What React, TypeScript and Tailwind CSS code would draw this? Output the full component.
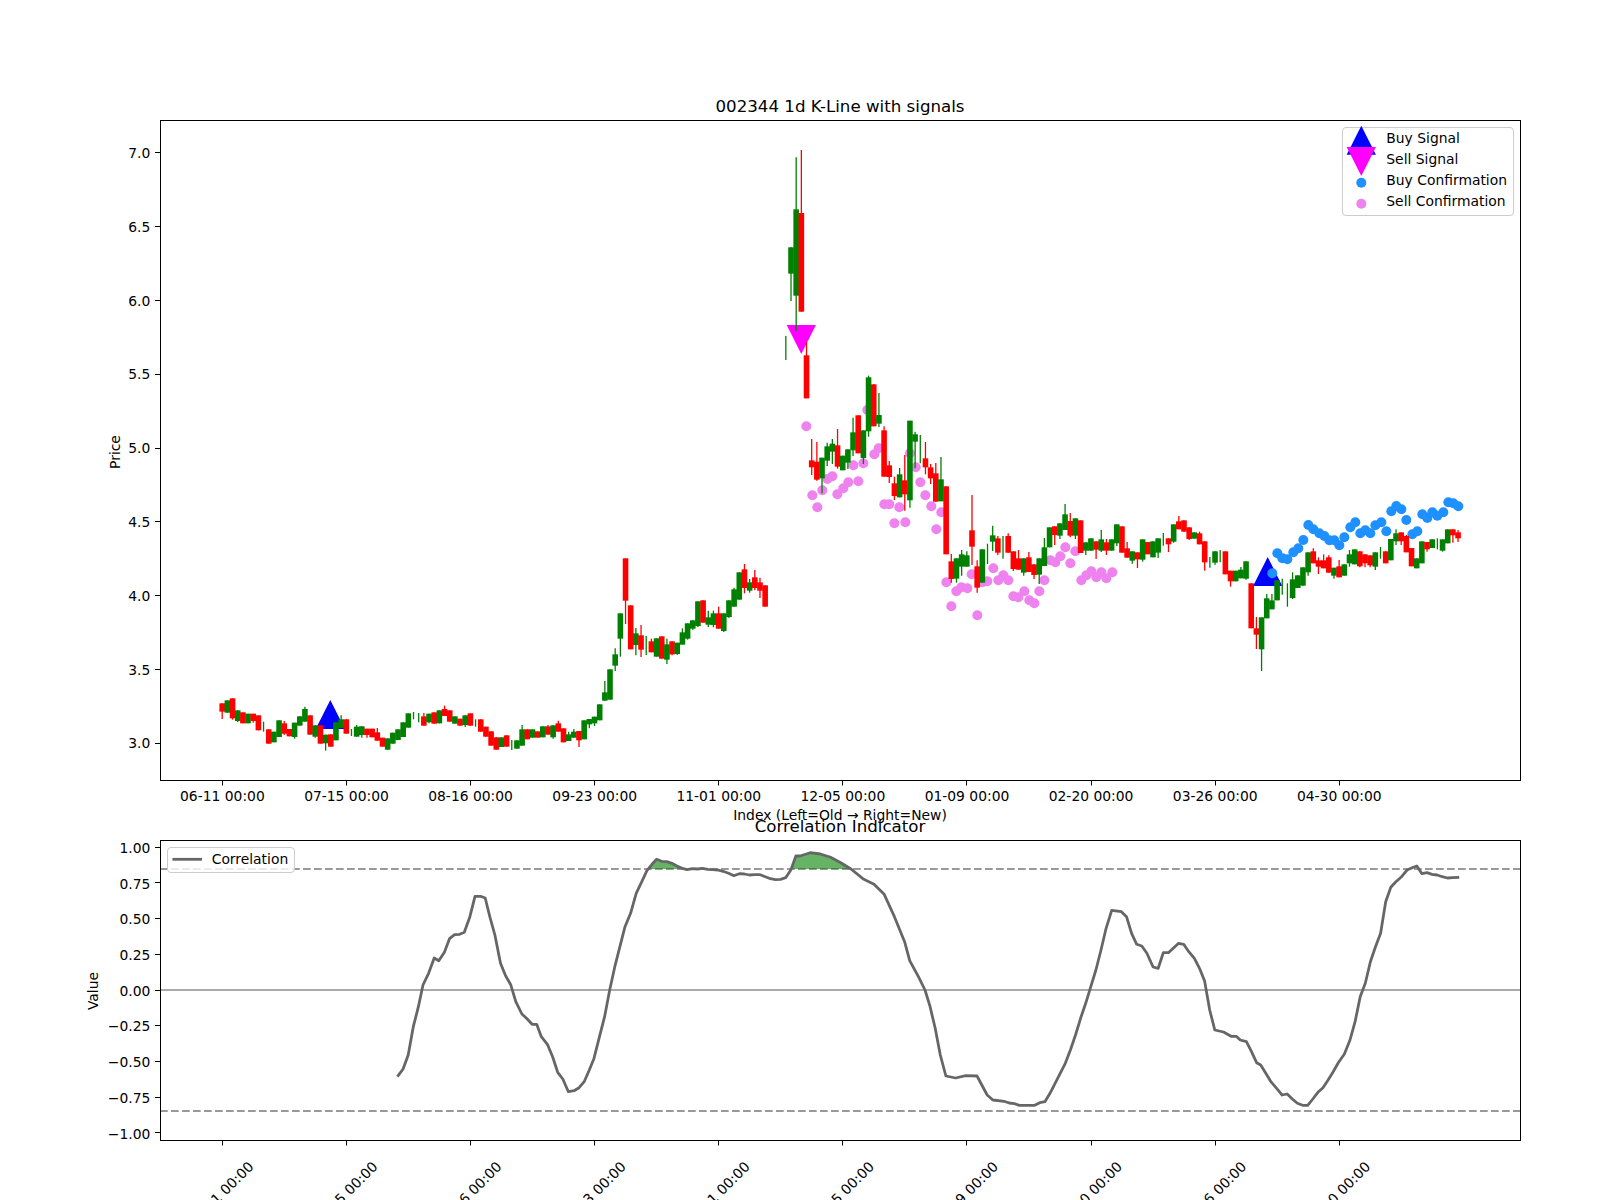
type Row = [string, number, number, number?, number?];

// rows are [colour, bodyTop, bodyBottom, wickTop, wickBottom], read off at 3x from a given y origin
const toCandles = (originY: number, rows: Row[]) =>
  rows.map(([c, t, b, wt, wb]) => ({
    color: c === "r" ? "#ff0000" : "#008000",
    top: originY + t / 3,
    bottom: originY + b / 3,
    wickTop: originY + (wt ?? t) / 3,
    wickBottom: originY + (wb ?? b) / 3,
    hasBody: b > t,
  }));

const candles = [
  ...toCandles(640, [
    ["r", 190, 215, 190, 237], ["g", 181, 218], ["r", 175, 235, 175, 239], ["g", 211, 243, 211, 246], ["r", 217, 250],
    ["g", 221, 250], ["r", 221, 243, 221, 248], ["r", 226, 271], ["g", 0, 0, 245, 275], ["r", 268, 311],
    ["g", 275, 307], ["g", 241, 291], ["r", 250, 281, 243, 285], ["r", 267, 289], ["g", 248, 291, 248, 296],
    ["g", 229, 257], ["g", 207, 245, 200, 245], ["r", 226, 284], ["g", 256, 290, 256, 293], ["r", 256, 311],
    ["g", 284, 310, 284, 332], ["r", 283, 320], ["g", 247, 301], ["g", 238, 264, 226, 264], ["r", 238, 281],
    ["g", 0, 0, 267, 288], ["g", 260, 290, 255, 290], ["g", 259, 285, 259, 293], ["r", 266, 285, 266, 293], ["r", 266, 292],
    ["r", 277, 302, 264, 302], ["r", 293, 320], ["g", 295, 329], ["g", 278, 311], ["g", 268, 300],
    ["g", 247, 291], ["g", 220, 263], ["g", 0, 0, 216, 238], ["g", 0, 0, 219, 247], ["r", 229, 257, 219, 257],
    ["g", 221, 247, 221, 250], ["r", 217, 251], ["g", 211, 250], ["r", 207, 228, 197, 228], ["r", 211, 245],
    ["g", 229, 251], ["r", 236, 257], ["g", 226, 255, 226, 261], ["r", 220, 257], ["g", 0, 0, 238, 260],
    ["r", 238, 275], ["r", 260, 290], ["r", 274, 317], ["r", 292, 329], ["g", 292, 321],
    ["r", 286, 320], ["g", 0, 0, 300, 330], ["g", 301, 326], ["g", 268, 317, 255, 317], ["r", 268, 298],
    ["g", 268, 293], ["r", 274, 293], ["g", 259, 292], ["r", 259, 284, 255, 284], ["g", 256, 292, 256, 296],
    ["r", 250, 275, 242, 275], ["r", 265, 307], ["g", 283, 303, 275, 303], ["g", 275, 293, 267, 293], ["r", 273, 301, 273, 321],
    ["g", 241, 298], ["g", 237, 253, 237, 265], ["g", 230, 250, 230, 258], ["g", 193, 241], ["g", 157, 182, 123, 182],
    ["g", 88, 179], ["g", 43, 77, 25, 93],
  ]),
  ...toCandles(540, [
    ["g", 220, 296, 220, 350], ["r", 55, 182, 55, 252], ["r", 196, 328], ["g", 280, 315, 264, 346], ["r", 286, 329, 255, 351],
    ["g", 0, 0, 288, 345], ["r", 304, 337, 296, 337], ["g", 295, 350], ["r", 289, 356], ["g", 313, 359, 296, 372],
    ["r", 304, 343, 304, 346], ["g", 308, 342, 308, 345], ["g", 277, 314, 265, 314], ["g", 250, 296, 250, 299], ["g", 241, 266, 241, 269],
    ["g", 184, 258, 184, 261], ["r", 181, 248], ["g", 232, 254, 212, 261], ["g", 220, 255, 212, 262], ["r", 220, 266, 200, 266],
    ["g", 220, 273, 220, 276], ["g", 181, 231, 181, 234], ["g", 148, 200, 143, 200], ["g", 97, 179], ["r", 88, 144, 72, 160],
    ["g", 127, 152, 117, 158], ["r", 112, 144, 90, 151], ["r", 127, 152, 113, 174], ["r", 136, 200],
  ]),
  null,
  null,
  null,
  ...toCandles(130, [
    ["g", 0, 0, 618, 690], ["g", 352, 431, 352, 513], ["g", 238, 497, 82, 603], ["r", 249, 545, 60, 545], ["r", 676, 805, 636, 805],
  ]),
  ...toCandles(380, [
    ["r", 241, 262, 177, 285], ["r", 245, 299, 186, 302], ["g", 233, 295, 233, 340], ["g", 199, 242, 188, 258], ["g", 191, 215, 177, 252],
    ["r", 196, 260, 147, 266], ["g", 227, 271], ["g", 208, 248, 208, 267], ["g", 157, 211, 113, 228], ["r", 106, 220],
    ["g", 151, 234, 151, 252], ["g", -8, 154, -13, 170], ["r", 13, 139], ["g", 105, 131, 39, 141], ["r", 151, 290, 139, 290],
    ["r", 256, 291, 243, 309], ["r", 310, 348, 290, 360], ["g", 283, 352, 264, 352], ["r", 301, 343, 225, 392], ["g", 122, 361, 122, 383],
    ["g", 163, 185, 155, 265], ["g", 0, 0, 165, 250], ["r", 235, 262, 186, 283], ["r", 262, 295, 252, 312], ["r", 280, 365, 249, 365],
    ["g", 298, 364, 231, 364], ["r", 319, 523], ["r", 544, 597, 522, 608], ["g", 535, 596, 535, 608], ["g", 523, 560, 510, 587],
    ["g", 526, 560, 514, 560], ["r", 451, 500, 345, 555], ["r", 559, 623, 541, 638], ["g", 508, 608], ["g", 0, 0, 491, 552],
    ["g", 466, 485, 437, 513], ["r", 475, 518, 468, 525], ["g", 0, 0, 468, 536], ["r", 468, 518, 460, 518], ["r", 514, 567, 514, 573],
    ["r", 535, 569, 510, 569], ["g", 535, 578, 535, 587], ["r", 532, 576, 516, 576], ["r", 553, 585, 553, 597], ["g", 535, 584, 535, 612],
    ["g", 502, 558, 474, 558], ["g", 442, 502], ["r", 439, 465, 439, 495], ["g", 430, 467, 430, 477], ["g", 403, 450, 372, 450],
    ["r", 423, 467, 399, 472], ["g", 415, 467, 415, 477], ["r", 421, 519], ["g", 487, 512, 487, 525], ["g", 475, 512],
    ["r", 484, 509, 484, 537], ["g", 478, 512, 450, 516], ["r", 487, 512, 477, 525], ["g", 478, 512], ["g", 433, 490, 433, 498],
  ]),
  ...toCandles(480, [
    ["r", 139, 218], ["r", 205, 233, 186, 233], ["g", 214, 242, 214, 251], ["r", 217, 238, 217, 264], ["g", 178, 239, 178, 245],
    ["r", 186, 223], ["g", 184, 232], ["g", 175, 218, 175, 234], ["g", 0, 0, 159, 197], ["r", 175, 193, 175, 216],
    ["g", 133, 185, 133, 188], ["r", 124, 148, 108, 148], ["r", 121, 155], ["r", 142, 177, 142, 180], ["g", 157, 176],
    ["r", 160, 193, 155, 193], ["r", 184, 247, 184, 272], ["g", 0, 0, 231, 263], ["g", 214, 248, 214, 254], ["g", 0, 0, 210, 247],
    ["r", 214, 283], ["r", 272, 304, 272, 320], ["g", 272, 304], ["g", 269, 295, 261, 295], ["g", 244, 296, 244, 299],
    ["r", 310, 445], ["r", 445, 464, 411, 507], ["g", 412, 508, 412, 573], ["g", 355, 415, 342, 415], ["g", 361, 388, 342, 388],
    ["g", 301, 361], ["g", 0, 0, 296, 344], ["g", 0, 0, 310, 380], ["g", 298, 354, 277, 357], ["g", 286, 324],
    ["g", 262, 317], ["g", 217, 277, 217, 287], ["r", 214, 250, 205, 250], ["r", 241, 260, 232, 282], ["r", 241, 265, 223, 265],
    ["r", 232, 278, 226, 278], ["g", 263, 287, 263, 296], ["r", 259, 292, 240, 292], ["g", 253, 287], ["g", 223, 250, 210, 260],
    ["g", 208, 253], ["r", 214, 259, 214, 262], ["r", 223, 250, 223, 262], ["r", 226, 256, 226, 262], ["g", 217, 260, 217, 270],
    ["g", 0, 0, 201, 236], ["r", 214, 250], ["g", 177, 241], ["g", 160, 184, 148, 195], ["r", 157, 184, 157, 195],
    ["r", 168, 217, 165, 217], ["r", 204, 259], ["g", 235, 265], ["g", 184, 250], ["r", 186, 208, 186, 215],
    ["g", 178, 204], ["g", 0, 0, 175, 208], ["g", 178, 212, 178, 215], ["g", 148, 190], ["r", 148, 166, 148, 188],
    ["r", 157, 175, 150, 186],
  ]),
];

const sellDots = [
  [79, 139], [97, 346], [112, 382], [127, 331], [142, 297], [157, 289], [172, 343], [190, 325], [205, 307], [220, 256],
  [235, 304], [250, 250], [262, 90], [283, 223], [296, 205], [313, 373], [328, 373], [343, 430], [358, 382], [376, 427],
  [390, 220], [407, 262], [421, 307], [436, 346], [454, 379], [484, 397], [469, 448], [499, 607], [514, 679], [529, 634],
  [544, 622], [562, 625], [575, 583], [592, 706], [607, 607], [622, 604], [640, 565], [655, 601], [670, 586], [685, 601],
  [700, 649], [715, 652], [733, 634], [748, 661], [763, 670], [778, 634], [793, 601], [811, 541], [826, 547], [841, 529],
  [856, 502], [871, 550], [886, 514], [904, 601], [919, 586], [934, 574], [949, 592], [964, 577], [979, 595], [997, 577],
].map(([x, y]) => [780 + x / 3, 380 + y / 3]);

const buyDots = [
  [457, 280], [472, 220], [487, 235], [502, 238], [520, 217], [535, 205], [550, 180], [565, 135], [580, 148], [598, 160],
  [613, 168], [628, 181], [643, 181], [658, 196], [673, 172], [691, 142], [706, 127], [721, 160], [736, 151], [751, 160],
  [766, 136], [784, 127], [799, 154], [814, 94], [829, 78], [844, 88], [859, 120], [877, 163], [892, 154], [907, 103],
  [922, 114], [937, 97], [952, 107], [970, 97], [985, 67], [1000, 70], [1015, 79],
].map(([x, y]) => [1120 + x / 3, 480 + y / 3]);

const corrLeft = [
  [779, 890], [790, 867], [800, 825], [810, 740], [820, 680], [829, 615], [840, 580], [851, 534], [860, 542], [871, 517],
  [881, 476], [891, 464], [901, 463], [910, 457], [921, 410], [931, 349], [942, 349], [951, 354], [960, 410], [970, 465],
  [981, 550], [991, 587], [1001, 614], [1011, 665], [1023, 702], [1033, 716], [1043, 733], [1052, 733], [1061, 770], [1073, 793],
  [1083, 830], [1093, 877], [1103, 897], [1114, 935], [1125, 932], [1135, 923], [1145, 905], [1155, 870], [1164, 836], [1175, 770],
  [1185, 710], [1195, 630], [1205, 560], [1215, 500], [1225, 440], [1236, 400], [1247, 340], [1258, 305], [1268, 272], [1278, 253],
  [1287, 238], [1297, 244], [1307, 245], [1317, 250], [1327, 258], [1337, 265], [1347, 269], [1357, 266], [1367, 267], [1377, 265],
  [1387, 268], [1397, 269], [1407, 270], [1417, 274], [1428, 280], [1438, 287], [1449, 281], [1459, 282], [1469, 285], [1479, 284],
  [1490, 284], [1500, 290], [1510, 296], [1520, 299], [1530, 298], [1540, 293], [1550, 270], [1560, 228],
].map(([x, y]) => [x / 1.96, 780 + y / 3]);

const corrRight = [
  [0, 228], [20, 218], [40, 222], [60, 232], [80, 248], [100, 267], [125, 298], [145, 313], [165, 343], [185, 410],
  [205, 485], [215, 542], [232, 590], [245, 630], [255, 680], [265, 745], [275, 825], [286, 888], [305, 894], [325, 887],
  [347, 888], [367, 945], [378, 960], [400, 964], [410, 969], [420, 971], [430, 976], [460, 976], [470, 968], [480, 965],
  [490, 940], [500, 910], [520, 850], [530, 810], [540, 765], [550, 715], [560, 670], [570, 620], [580, 570], [590, 510],
  [600, 445], [611, 391], [630, 395], [640, 410], [650, 460], [660, 493], [670, 498], [680, 520], [692, 561], [702, 565],
  [712, 518], [722, 518], [742, 490], [752, 493], [762, 515], [773, 535], [783, 565], [793, 603], [803, 690], [813, 750],
  [830, 756], [845, 769], [855, 769], [863, 780], [875, 785], [885, 815], [895, 848], [903, 855], [913, 880], [923, 905],
  [933, 923], [945, 945], [955, 942], [965, 957], [975, 970], [985, 976], [995, 976], [1005, 957], [1015, 937], [1025, 923],
  [1035, 900], [1045, 875], [1055, 848], [1067, 822], [1078, 780], [1088, 725], [1098, 650], [1108, 610], [1118, 545], [1128, 500],
  [1138, 460], [1148, 365], [1158, 322], [1168, 305], [1178, 292], [1190, 270], [1200, 263], [1209, 258], [1219, 281], [1229, 278],
  [1239, 283], [1249, 285], [1259, 290], [1269, 294], [1279, 293], [1292, 292],
].map(([x, y]) => [800 + x / 1.96, 780 + y / 3]);

const corr = [...corrLeft, ...corrRight];
const pts = (list: number[][]) => list.map(([x, y]) => `${x.toFixed(1)},${y.toFixed(1)}`).join(" ");

const upperY = 869;
const fillA = [[649.7, upperY], ...corr.filter(([x, y]) => x > 650 && x < 682 && y < upperY), [682.5, upperY]];
const fillB = [[792, upperY], ...corr.filter(([x, y]) => x > 792 && x < 851 && y < upperY), [851, upperY]];

const labels = ["06-11", "07-15", "08-16", "09-23", "11-01", "12-05", "01-09", "02-20", "03-26", "04-30"];
const tickX = labels.map((_, k) => 222.4 + 124.1 * k);
const candleX = (i: number) => 222.2 + 5.171 * i;
const priceY = (p: number) => 743.3 - 147.6 * (p - 3);
const corrY = (v: number) => 990 - 142.86 * v;
const snap = (v: number) => Math.floor(v) + 0.5;

const priceTicks = ["3.0", "3.5", "4.0", "4.5", "5.0", "5.5", "6.0", "6.5", "7.0"];
const corrTicks = ["1.00", "0.75", "0.50", "0.25", "0.00", "\u22120.25", "\u22120.50", "\u22120.75", "\u22121.00"];

const TriangleUp = ({ x, top }: { x: number; top: number }) => (
  <polygon points={`${x},${top} ${x - 14.6},${top + 29} ${x + 14.6},${top + 29}`} fill="#0000ff" />
);

const TriangleDown = ({ x, top }: { x: number; top: number }) => (
  <polygon points={`${x - 14.6},${top} ${x + 14.6},${top} ${x},${top + 29}`} fill="#ff00ff" />
);

const YTick = ({ y, label, textDy }: { y: number; label: string; textDy: number }) => (
  <g>
    <line x1={155} x2={160} y1={snap(y)} y2={snap(y)} stroke="#000" strokeWidth={1} />
    <text x={150.3} y={y + textDy} textAnchor="end">
      {label}
    </text>
  </g>
);

const PriceAxes = () => (
  <g>
    <TriangleUp x={330.3} top={700} />
    <TriangleUp x={1267.7} top={557} />
    <TriangleDown x={801.3} top={325} />
    {sellDots.map(([x, y], i) => (
      <circle key={i} cx={x} cy={y} r={5} fill="#ee82ee" />
    ))}
    {buyDots.map(([x, y], i) => (
      <circle key={i} cx={x} cy={y} r={5} fill="#1e90ff" />
    ))}
    {candles.map((c, i) =>
      c ? (
        <g key={i}>
          <line x1={candleX(i)} x2={candleX(i)} y1={c.wickTop} y2={c.wickBottom} stroke={c.color} strokeWidth={1.3} />
          {c.hasBody && <rect x={candleX(i) - 2.8} y={c.top} width={5.6} height={c.bottom - c.top} fill={c.color} />}
        </g>
      ) : null,
    )}
    <rect x={160.5} y={120.5} width={1360} height={660} fill="none" stroke="#000" strokeWidth={1} />
    {priceTicks.map((label) => (
      <YTick key={label} y={priceY(Number(label))} label={label} textDy={5} />
    ))}
    {tickX.map((x, k) => (
      <g key={k}>
        <line x1={snap(x)} x2={snap(x)} y1={781} y2={785.5} stroke="#000" strokeWidth={1} />
        <text x={x} y={801} textAnchor="middle">
          {labels[k]} 00:00
        </text>
      </g>
    ))}
    <text x={120} y={452} textAnchor="middle" transform="rotate(-90 120 452)">
      Price
    </text>
    <text x={840} y={820} textAnchor="middle">
      Index (Left=Old → Right=New)
    </text>
    <text x={840} y={111.7} textAnchor="middle" className="text-[16.67px]">
      002344 1d K-Line with signals
    </text>
    <rect x={1342.5} y={127.5} width={171} height={88} rx={3.5} fill="#ffffff" fillOpacity={0.8} stroke="#cccccc" strokeWidth={1} />
    <TriangleUp x={1361.3} top={125.7} />
    <TriangleDown x={1361.3} top={147} />
    <circle cx={1361.3} cy={182.7} r={5} fill="#1e90ff" />
    <circle cx={1361.3} cy={203.7} r={5} fill="#ee82ee" />
    <text x={1386.3} y={143.3}>Buy Signal</text>
    <text x={1386.3} y={164.3}>Sell Signal</text>
    <text x={1386.3} y={185.3}>Buy Confirmation</text>
    <text x={1386.3} y={206.3}>Sell Confirmation</text>
  </g>
);

const CorrelationAxes = () => (
  <g>
    <line x1={160} x2={1520} y1={990} y2={990} stroke="#aaaaaa" strokeWidth={2.08} />
    <line x1={160} x2={1520} y1={869} y2={869} stroke="#999999" strokeWidth={2} strokeDasharray="7.7 3.3" />
    <line x1={160} x2={1520} y1={1111} y2={1111} stroke="#999999" strokeWidth={2} strokeDasharray="7.7 3.3" />
    <polygon points={pts(fillA)} fill="#008000" fillOpacity={0.6} />
    <polygon points={pts(fillB)} fill="#008000" fillOpacity={0.6} />
    <polyline points={pts(corr)} fill="none" stroke="#666666" strokeWidth={2.78} strokeLinejoin="round" />
    <rect x={160.5} y={840.5} width={1360} height={300} fill="none" stroke="#000" strokeWidth={1} />
    {corrTicks.map((label, k) => (
      <YTick key={label} y={corrY(1 - k * 0.25)} label={label} textDy={5.7} />
    ))}
    {tickX.map((x, k) => (
      <g key={k}>
        <line x1={snap(x)} x2={snap(x)} y1={1141} y2={1145.5} stroke="#000" strokeWidth={1} />
        <text x={x - 1.5} y={1194} textAnchor="middle" dominantBaseline="central" transform={`rotate(-45 ${x - 1.5} 1194)`}>
          {labels[k]} 00:00
        </text>
      </g>
    ))}
    <text x={98} y={991} textAnchor="middle" transform="rotate(-90 98 991)">
      Value
    </text>
    <text x={840} y={831.7} textAnchor="middle" className="text-[16.67px]">
      Correlation Indicator
    </text>
    <rect x={167.5} y={847.5} width={127} height={25} rx={3.5} fill="#ffffff" fillOpacity={0.8} stroke="#cccccc" strokeWidth={1} />
    <line x1={172.4} x2={202} y1={859.3} y2={859.3} stroke="#666666" strokeWidth={2.78} />
    <text x={211.7} y={864}>Correlation</text>
  </g>
);

export default function App() {
  return (
    <div className="w-[1600px] h-[1200px] bg-white overflow-hidden">
      <svg
        viewBox="0 0 1600 1200"
        className="block w-[1600px] h-[1200px] font-['DejaVu_Sans',sans-serif] text-[13.89px] fill-black"
      >
        <PriceAxes />
        <CorrelationAxes />
      </svg>
    </div>
  );
}
